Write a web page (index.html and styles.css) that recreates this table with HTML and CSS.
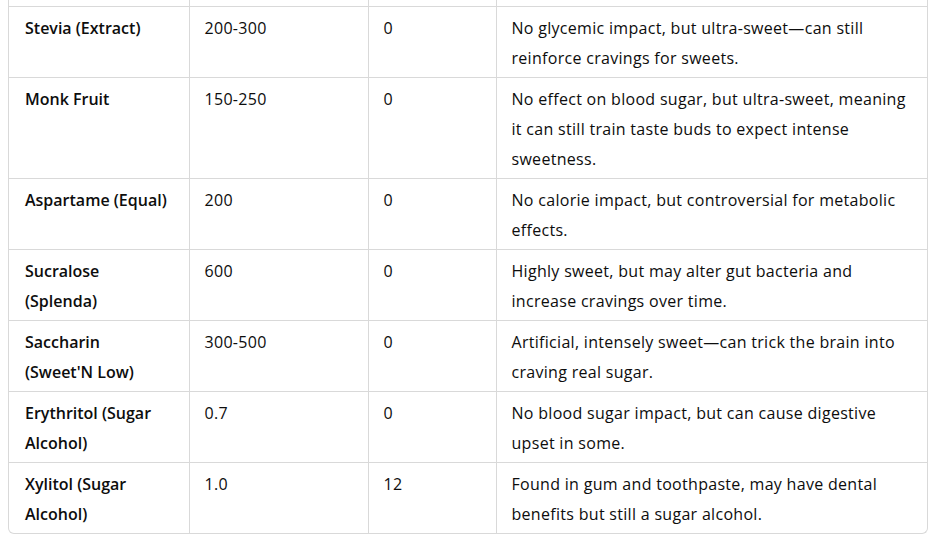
FILE: index.html
```html
<!DOCTYPE html>
<html lang="en">
<head>
<meta charset="utf-8">
<title>Sweeteners</title>
<link rel="stylesheet" href="styles.css">
</head>
<body>
<div class="table-wrap">
  <table class="sweet-table">
    <colgroup>
      <col class="c1"><col class="c2"><col class="c3"><col class="c4">
    </colgroup>
    <tbody>
      <tr class="spacer"><td></td><td></td><td></td><td></td></tr>
      <tr>
        <td class="name">Stevia (Extract)</td>
        <td>200-300</td>
        <td>0</td>
        <td>No glycemic impact, but ultra-sweet—can still reinforce cravings for sweets.</td>
      </tr>
      <tr>
        <td class="name">Monk Fruit</td>
        <td>150-250</td>
        <td>0</td>
        <td>No effect on blood sugar, but ultra-sweet, meaning it can still train taste buds to expect intense sweetness.</td>
      </tr>
      <tr>
        <td class="name">Aspartame (Equal)</td>
        <td>200</td>
        <td>0</td>
        <td>No calorie impact, but controversial for metabolic effects.</td>
      </tr>
      <tr>
        <td class="name">Sucralose (Splenda)</td>
        <td>600</td>
        <td>0</td>
        <td>Highly sweet, but may alter gut bacteria and increase cravings over time.</td>
      </tr>
      <tr>
        <td class="name">Saccharin <span class="nowrap">(Sweet'N Low)</span></td>
        <td>300-500</td>
        <td>0</td>
        <td>Artificial, intensely sweet—can trick the brain into craving real sugar.</td>
      </tr>
      <tr>
        <td class="name">Erythritol (Sugar Alcohol)</td>
        <td>0.7</td>
        <td>0</td>
        <td>No blood sugar impact, but can cause digestive upset in some.</td>
      </tr>
      <tr>
        <td class="name">Xylitol (Sugar Alcohol)</td>
        <td>1.0</td>
        <td>12</td>
        <td>Found in gum and toothpaste, may have dental benefits but still a sugar alcohol.</td>
      </tr>
    </tbody>
  </table>
</div>
</body>
</html>
```
FILE: styles.css
```css
html, body {
  margin: 0;
  padding: 0;
  background: #ffffff;
}
body {
  padding-left: 8px;
  font-family: "Segoe UI", "Open Sans", "Noto Sans", sans-serif;
  font-size: 16px;
  color: #0d0d0d;
}
.table-wrap {
  width: 920px;
  box-sizing: border-box;
  border: 1px solid #d9d9d9;
  border-top: none;
  border-radius: 0 0 6px 6px;
  overflow: hidden;
}
.sweet-table {
  width: 918px;
  table-layout: fixed;
  border-collapse: collapse;
  border-spacing: 0;
}
.c1 { width: 180px; }
.c2 { width: 179px; }
.c3 { width: 128px; }
.c4 { width: 431px; }
.sweet-table td {
  box-sizing: border-box;
  padding: 6px 16px 4px 15px;
  line-height: 30px;
  letter-spacing: 0.3px;
  vertical-align: top;
  border-top: 1px solid #d9d9d9;
  border-right: 1px solid #d9d9d9;
  text-align: left;
}
.sweet-table td:last-child {
  border-right: none;
}
.sweet-table tr.spacer td {
  border-top: none;
  height: 6px;
  padding: 0;
  line-height: 0;
}
.sweet-table td.name {
  font-weight: 600;
  letter-spacing: 0;
  padding-left: 16px;
}
.nowrap {
  white-space: nowrap;
}
```
